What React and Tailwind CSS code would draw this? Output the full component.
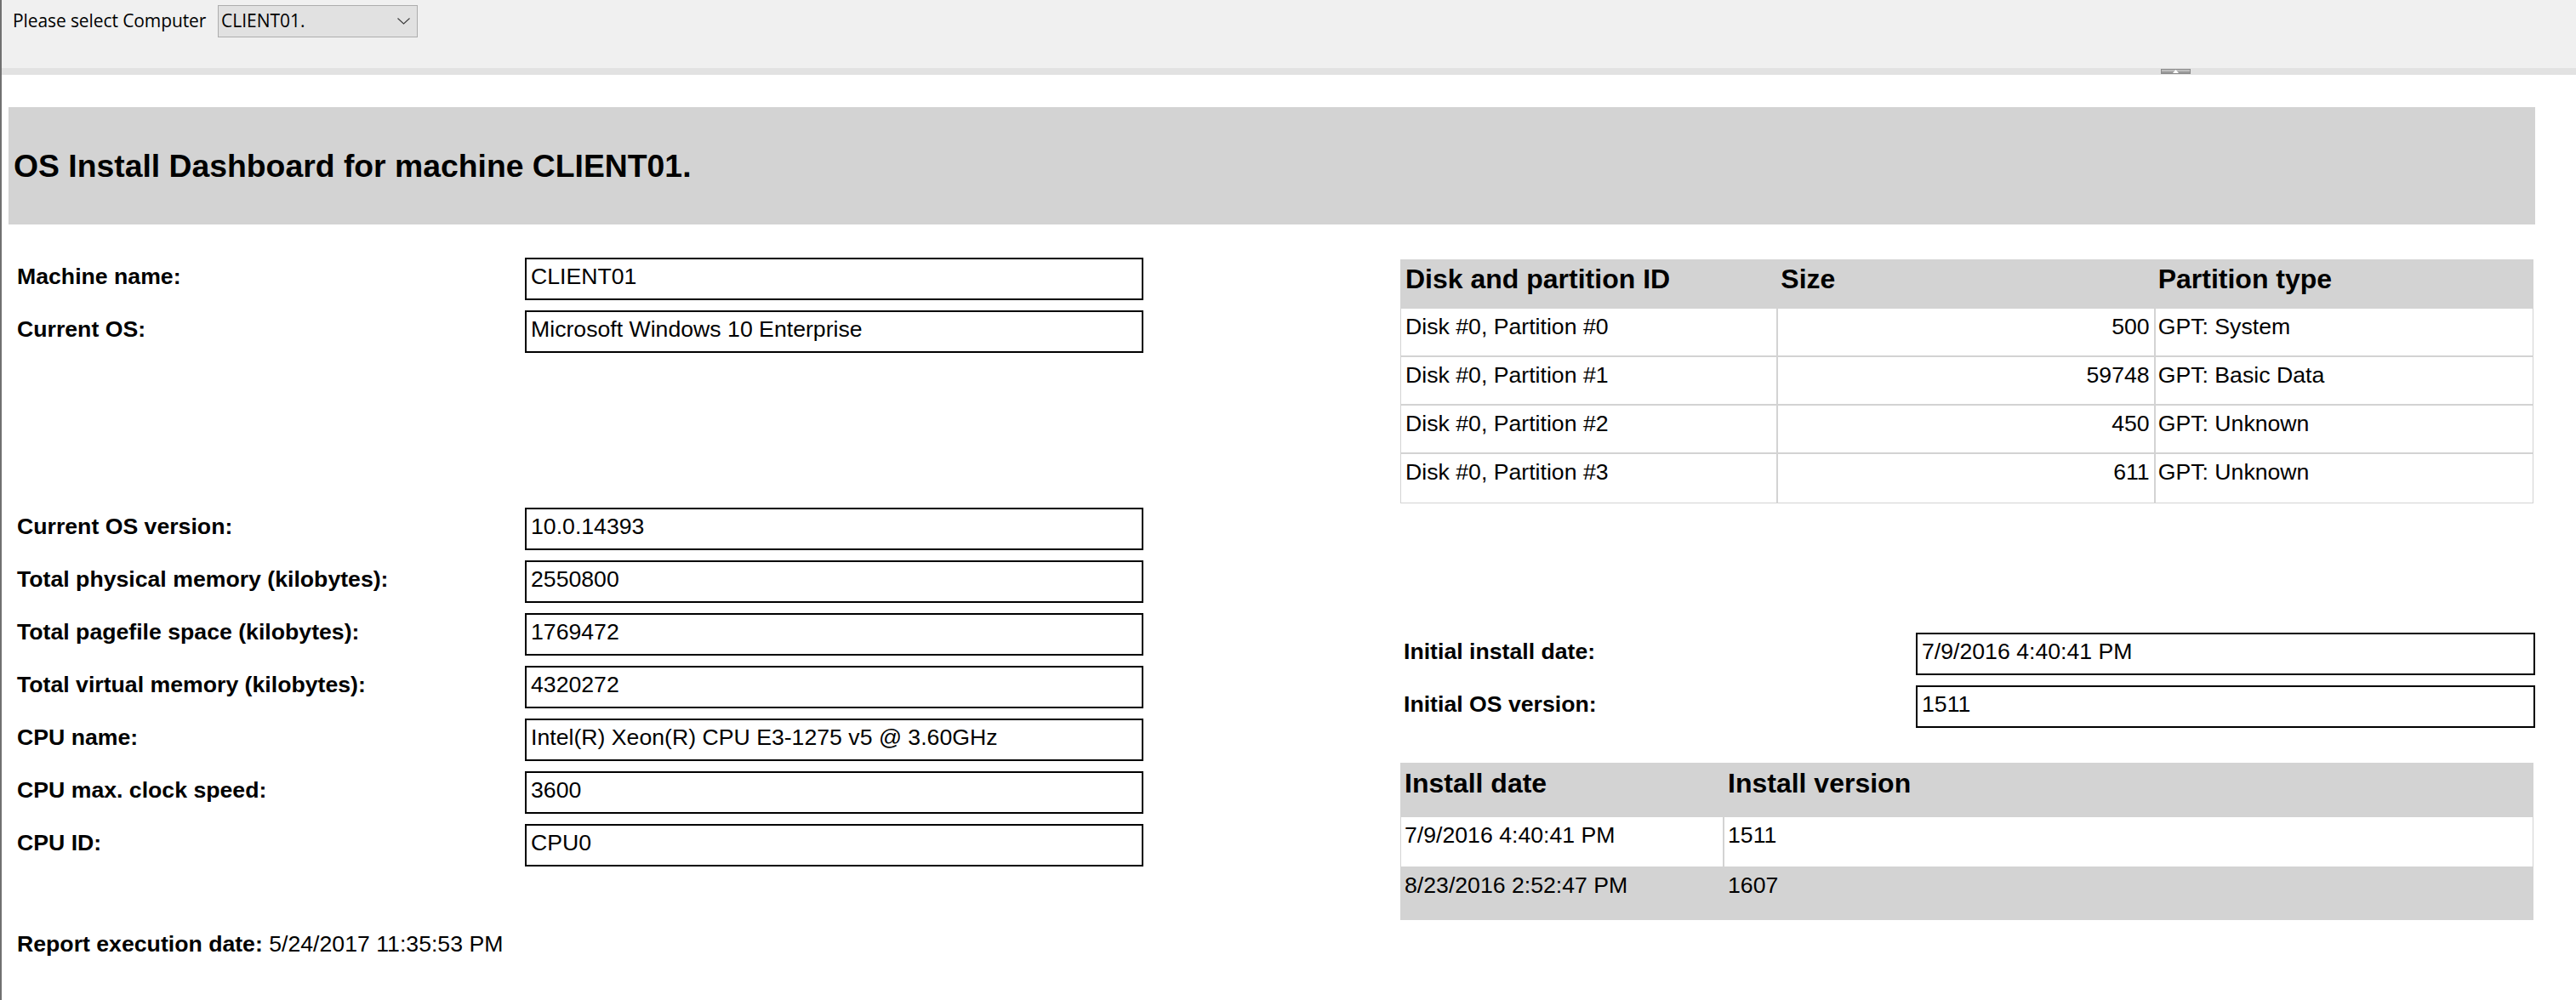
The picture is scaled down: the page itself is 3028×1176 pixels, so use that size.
import React from "react";

const leftTop = [
  ["Machine name:", "CLIENT01"],
  ["Current OS:", "Microsoft Windows 10 Enterprise"],
];

const leftBottom = [
  ["Current OS version:", "10.0.14393"],
  ["Total physical memory (kilobytes):", "2550800"],
  ["Total pagefile space (kilobytes):", "1769472"],
  ["Total virtual memory (kilobytes):", "4320272"],
  ["CPU name:", "Intel(R) Xeon(R) CPU E3-1275 v5 @ 3.60GHz"],
  ["CPU max. clock speed:", "3600"],
  ["CPU ID:", "CPU0"],
];

const partitions = [
  ["Disk #0, Partition #0", "500", "GPT: System"],
  ["Disk #0, Partition #1", "59748", "GPT: Basic Data"],
  ["Disk #0, Partition #2", "450", "GPT: Unknown"],
  ["Disk #0, Partition #3", "611", "GPT: Unknown"],
];

const Field = ({ label, value, labelWidth = "w-[597px]", boxWidth = "w-[727px]" }) => (
  <div className="flex h-[50px]">
    <div className={`${labelWidth} pt-[7px] text-[26.67px] font-bold leading-[30px]`}>
      {label}
    </div>
    <div
      className={`${boxWidth} h-[50px] border-2 border-black px-[5px] pt-[5px] text-[26.67px] leading-[30px] whitespace-nowrap`}
    >
      {value}
    </div>
  </div>
);

const App = () => {
  return (
    <div className="h-[1176px] w-[3028px] overflow-hidden border-l-2 border-[#707070] bg-white font-['Liberation_Sans',Arial,sans-serif] text-black">
      {/* parameter toolbar */}
      <div className="flex h-[80px] items-start bg-[#f0f0f0] pl-[13px] pt-[6px] font-['Open_Sans','Noto_Sans',sans-serif]">
        <div className="flex h-[38px] items-center">
          <span className="w-[241px] text-[21px] tracking-[-0.1px] text-black">
            Please select Computer
          </span>
          <div className="flex h-[38px] w-[235px] items-center justify-between border border-[#adadad] bg-[#e1e1e1] pl-[3px] pr-[8px]">
            <span className="text-[21px] text-black">CLIENT01.</span>
            <svg width="15" height="8" viewBox="0 0 15 8" fill="none">
              <polyline points="0.5,0.5 7.5,7 14.5,0.5" stroke="#3c3c3c" strokeWidth="1.1" />
            </svg>
          </div>
        </div>
      </div>
      <div className="flex h-[8px] justify-end bg-[#e2e2e2] pr-[453px] pt-[1px]">
        <div className="flex h-[6px] w-[35px] items-center justify-center border border-[#8a8a8a] bg-linear-to-b from-[#cdcdcd] to-[#8c8c8c]">
          <svg width="7" height="4" viewBox="0 0 7 4">
            <polygon points="3.5,0 7,4 0,4" fill="#ffffff" />
          </svg>
        </div>
      </div>

      {/* report body */}
      <div className="pl-[8px] pt-[38px]">
        <div className="flex h-[138px] w-[2970px] items-center bg-[#d3d3d3] pl-[6px]">
          <h1 className="text-[37.33px] font-bold leading-[42px]">
            OS Install Dashboard for machine CLIENT01.
          </h1>
        </div>

        <div className="mt-[39px] flex">
          {/* left column */}
          <div className="ml-[10px] w-[1324px]">
            <div className="flex flex-col gap-[12px]">
              {leftTop.map(([l, v]) => (
                <Field key={l} label={l} value={v} />
              ))}
            </div>
            <div className="mt-[182px] flex flex-col gap-[12px]">
              {leftBottom.map(([l, v]) => (
                <Field key={l} label={l} value={v} />
              ))}
            </div>
            <div className="mt-[76px] text-[26.67px] leading-[30px]">
              <span className="font-bold">Report execution date:</span> 5/24/2017 11:35:53 PM
            </div>
          </div>

          {/* right column */}
          <div className="ml-[302px] w-[1334px]">
            <div className="mt-[2px] w-[1332px] border-x border-b border-[#d3d3d3]">
              <div className="grid h-[58px] grid-cols-3 bg-[#d3d3d3] text-[32px] font-bold leading-[36px]">
                <div className="pl-[5px] pt-[5px]">Disk and partition ID</div>
                <div className="pl-[3px] pt-[5px]">Size</div>
                <div className="pl-[3px] pt-[5px]">Partition type</div>
              </div>
              {partitions.map(([id, size, type], i) => (
                <div
                  key={id}
                  className={`grid h-[57px] grid-cols-3 text-[26.67px] leading-[30px] ${
                    i < partitions.length - 1 ? "border-b-2 border-[#d3d3d3]" : ""
                  }`}
                >
                  <div className="border-r-2 border-[#d3d3d3] pl-[5px] pt-[6px]">{id}</div>
                  <div className="border-r-2 border-[#d3d3d3] pr-[5px] pt-[6px] text-right">{size}</div>
                  <div className="pl-[3px] pt-[6px]">{type}</div>
                </div>
              ))}
            </div>

            <div className="mt-[152px] flex flex-col gap-[12px]">
              <Field
                label="Initial install date:"
                value="7/9/2016 4:40:41 PM"
                labelWidth="w-[606px] pl-[4px]"
                boxWidth="w-[728px]"
              />
              <Field
                label="Initial OS version:"
                value="1511"
                labelWidth="w-[606px] pl-[4px]"
                boxWidth="w-[728px]"
              />
            </div>

            <div className="mt-[41px] w-[1332px]">
              <div className="grid h-[64px] grid-cols-[380px_1fr] bg-[#d3d3d3] text-[32px] font-bold leading-[36px]">
                <div className="pl-[5px] pt-[6px]">Install date</div>
                <div className="pl-[5px] pt-[6px]">Install version</div>
              </div>
              <div className="grid h-[58px] grid-cols-[380px_1fr] border-x border-[#d3d3d3] text-[26.67px] leading-[30px]">
                <div className="border-r-2 border-[#d3d3d3] pl-[4px] pt-[6px]">7/9/2016 4:40:41 PM</div>
                <div className="pl-[4px] pt-[6px]">1511</div>
              </div>
              <div className="grid h-[63px] grid-cols-[380px_1fr] bg-[#d3d3d3] text-[26.67px] leading-[30px]">
                <div className="pl-[5px] pt-[7px]">8/23/2016 2:52:47 PM</div>
                <div className="pl-[5px] pt-[7px]">1607</div>
              </div>
            </div>
          </div>
        </div>
      </div>
    </div>
  );
};

export default App;
